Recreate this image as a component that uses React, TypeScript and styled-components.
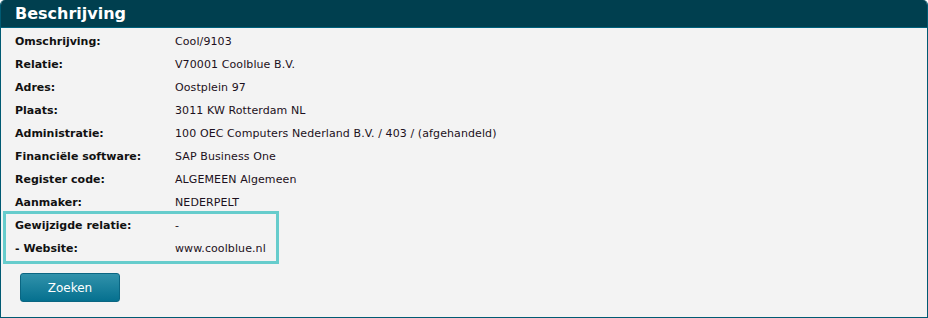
import React from "react";
import styled, { createGlobalStyle } from "styled-components";

const GlobalStyle = createGlobalStyle`
  html, body {
    margin: 0;
    padding: 0;
    background: #ffffff;
  }
  body {
    font-family: "DejaVu Sans", Verdana, sans-serif;
  }
`;

interface Field {
  label: string;
  value: string;
}

const fields: Field[] = [
  { label: "Omschrijving:", value: "Cool/9103" },
  { label: "Relatie:", value: "V70001 Coolblue B.V." },
  { label: "Adres:", value: "Oostplein 97" },
  { label: "Plaats:", value: "3011 KW Rotterdam NL" },
  { label: "Administratie:", value: "100 OEC Computers Nederland B.V. / 403 / (afgehandeld)" },
  { label: "Financiële software:", value: "SAP Business One" },
  { label: "Register code:", value: "ALGEMEEN Algemeen" },
  { label: "Aanmaker:", value: "NEDERPELT" },
];

const highlighted: Field[] = [
  { label: "Gewijzigde relatie:", value: "-" },
  { label: "- Website:", value: "www.coolblue.nl" },
];

const Panel = styled.section`
  width: 928px;
  height: 318px;
  box-sizing: border-box;
  display: flex;
  flex-direction: column;
  border: 1px solid #005a73;
  border-top: none;
  border-radius: 5px 5px 0 0;
  overflow: hidden;
  background: #f3f3f3;
`;

const Header = styled.h2`
  margin: 0;
  height: 28px;
  box-sizing: border-box;
  padding: 3px 0 0 14px;
  background: #003f4f;
  border-bottom: 1px solid #00617c;
  color: #ffffff;
  font-family: "DejaVu Sans", Verdana, sans-serif;
  font-size: 16px;
  font-weight: bold;
  line-height: 22px;
`;

const Body = styled.div`
  display: flex;
  flex-direction: column;
  padding: 2px 0 0 2px;
`;

const Row = styled.div`
  display: flex;
  height: 23px;
  align-items: center;
  padding-left: 12px;
  font-size: 11px;
  color: #111111;
`;

const Label = styled.span`
  width: 160px;
  flex: none;
  font-weight: bold;
`;

const Value = styled.span`
  color: #1c1020;
  letter-spacing: 0.1px;
`;

const Highlight = styled.div`
  width: 276px;
  box-sizing: border-box;
  border: 3px solid #66cccc;
  margin-top: -3px;
  padding: 0 0 1px 0;
  ${Row} {
    padding-left: 9px;
  }
`;

const Actions = styled.div`
  padding: 9px 0 0 17px;
`;

const Button = styled.button`
  width: 100px;
  height: 29px;
  border: 1px solid #0b6682;
  border-radius: 3px;
  background: linear-gradient(#3192ab, #05708f);
  color: #ffffff;
  font-family: "DejaVu Sans", Verdana, sans-serif;
  font-size: 12px;
  cursor: pointer;
`;

const FieldRow = ({ field }: { field: Field }) => (
  <Row>
    <Label>{field.label}</Label>
    <Value>{field.value}</Value>
  </Row>
);

export default function App() {
  return (
    <>
      <GlobalStyle />
      <Panel>
        <Header>Beschrijving</Header>
        <Body>
          {fields.map(f => (
            <FieldRow key={f.label} field={f} />
          ))}
          <Highlight>
            {highlighted.map(f => (
              <FieldRow key={f.label} field={f} />
            ))}
          </Highlight>
          <Actions>
            <Button>Zoeken</Button>
          </Actions>
        </Body>
      </Panel>
    </>
  );
}
